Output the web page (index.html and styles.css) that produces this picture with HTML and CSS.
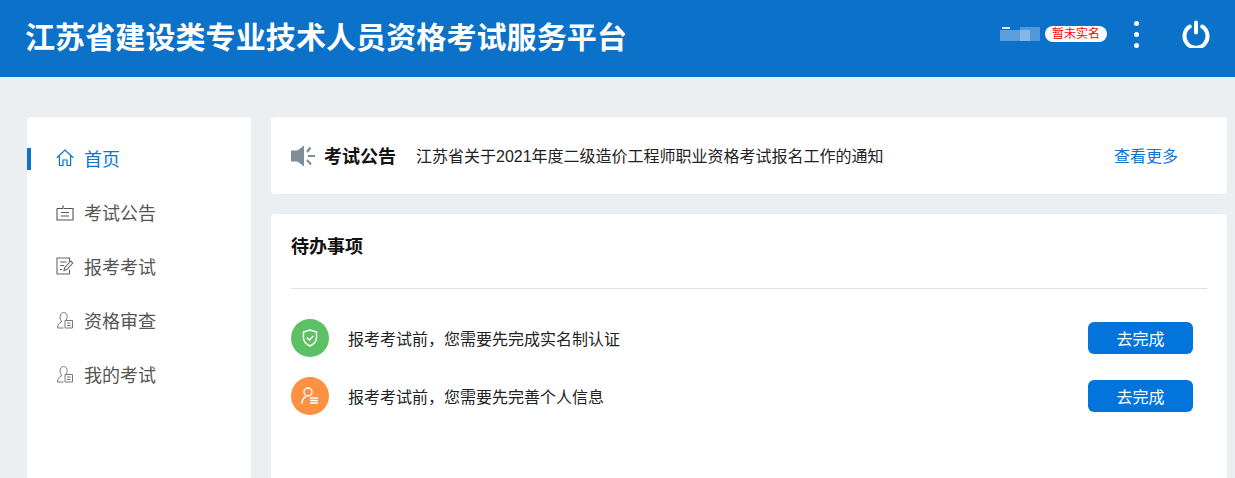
FILE: index.html
```html
<!DOCTYPE html>
<html lang="zh-CN">
<head>
  <meta charset="UTF-8" />
  <title>江苏省建设类专业技术人员资格考试服务平台</title>
  <link rel="stylesheet" href="styles.css">
</head>
<body>
  <header class="topbar">
    <h1>江苏省建设类专业技术人员资格考试服务平台</h1>
    <div class="topbar-right">
      <div class="user-blur"><i class="b1"></i><i class="b2"></i><i class="b3"></i><i class="b4"></i></div>
      <span class="realname">暂未实名</span>
      <div class="dots"><i></i><i></i><i></i></div>
      <svg class="power" width="28" height="28" viewBox="0 0 28 28" fill="none" stroke="#fff" stroke-width="4" stroke-linecap="round">
        <path d="M7.800 6.500a11.500 11.500 0 1 0 12.400 0"/>
        <path d="M14 2.500v10"/>
      </svg>
    </div>
  </header>

  <div class="page">
    <nav class="sidebar">
      <a class="nav-item active">
        <svg width="18" height="18" viewBox="0 0 18 18" fill="none" stroke="#0c71c9" stroke-width="1.200">
          <path d="M.8 8.800 9 1l8.200 7.800M3.400 7v9.500h3.600v-5.500h4v5.500h3.600V7"/>
        </svg>
        <span>首页</span>
      </a>
      <a class="nav-item">
        <svg width="18" height="18" viewBox="0 0 18 18" fill="none" stroke="#555" stroke-width="1.100">
          <path d="M1 5.500h5.500l1-3M1 5.500V17h16V5.500h-9.500M5 9.500h8M5 13h8"/>
        </svg>
        <span>考试公告</span>
      </a>
      <a class="nav-item">
        <svg width="18" height="18" viewBox="0 0 18 18" fill="none" stroke="#666" stroke-width="1.100">
          <path d="M13.500 4.500V1H1v16h12.500v-4.500M4 5h6.500M4 8.500h4M4 12.500h2M8 13.500l.8-3 6-6.500 2 2-6 6.500z"/>
        </svg>
        <span>报考考试</span>
      </a>
      <a class="nav-item">
        <svg width="18" height="18" viewBox="0 0 18 18" fill="none" stroke="#777" stroke-width="1">
          <path d="M6 10.500C3 9 3.500 1.500 7.500 1.500s4.500 5 2.500 7.500M6 10.500c-3 1-4.500 3.500-4.500 6.500h6M9 9.500h7.500v7.500h-7.500zM11 12h3.500M11 14.500h3.500"/>
        </svg>
        <span>资格审查</span>
      </a>
      <a class="nav-item">
        <svg width="18" height="18" viewBox="0 0 18 18" fill="none" stroke="#777" stroke-width="1">
          <path d="M6 10.500C3 9 3.500 1.500 7.500 1.500s4.500 5 2.500 7.500M6 10.500c-3 1-4.500 3.500-4.500 6.500h6M9 9.500h7.500v7.500h-7.500zM11 12h3.500M11 14.500h3.500"/>
        </svg>
        <span>我的考试</span>
      </a>
    </nav>

    <main class="content">
      <section class="notice card">
        <svg class="horn" width="24" height="22" viewBox="0 0 24 22" fill="#7f8c99">
          <path d="M0 5.500h6.500L13 .5v21L6.500 16.500H0z"/>
          <path d="M19.500 2.500l-3.500 4.500M17 11h7M16 15l4 4.500" stroke="#7f8c99" stroke-width="2.200" fill="none"/>
        </svg>
        <strong>考试公告</strong>
        <span class="notice-text">江苏省关于2021年度二级造价工程师职业资格考试报名工作的通知</span>
        <a class="more">查看更多</a>
      </section>

      <section class="todo card">
        <h2>待办事项</h2>
        <div class="todo-list">
          <div class="todo-row">
            <span class="circle green">
              <svg width="16" height="18" viewBox="0 0 16 18" fill="none" stroke="#fff" stroke-width="1.400">
                <path d="M8 1 1.500 3v6c0 4 3.500 6.500 6.500 8 3-1.500 6.500-4 6.500-8V3z"/>
                <path d="M4.800 8.500 7.300 11l4-4"/>
              </svg>
            </span>
            <p>报考考试前，您需要先完成实名制认证</p>
            <button>去完成</button>
          </div>
          <div class="todo-row">
            <span class="circle orange">
              <svg width="18" height="18" viewBox="0 0 18 18" fill="none" stroke="#fff" stroke-width="1.400">
                <circle cx="7" cy="5" r="4"/>
                <path d="M1 17c0-4 1.500-6.500 4-7.500"/>
                <path d="M9 11h8M9 13.500h8M9 16h8" stroke-width="1.500"/>
              </svg>
            </span>
            <p>报考考试前，您需要先完善个人信息</p>
            <button>去完成</button>
          </div>
        </div>
      </section>
    </main>
  </div>
</body>
</html>
```

FILE: styles.css
```css
* { box-sizing: border-box; margin: 0; padding: 0; }
html, body { height: 100%; overflow: hidden; }
body {
  font-family: "Liberation Sans", "Noto Sans CJK SC", sans-serif;
  background: #ebeff2;
  color: #222;
}
.topbar {
  height: 77px;
  background: #0c71c9;
  color: white;
  display: flex;
  align-items: center;
  justify-content: space-between;
  padding: 0 25px 0 25px;
}
.topbar h1 {
  font-size: 30px;
  font-weight: 700;
  letter-spacing: 0.1px;
  margin-top: -8px;
}
.topbar-right {
  display: flex;
  align-items: center;
  margin-top: -9px;
}
.user-blur {
  width: 40px;
  height: 24px;
  position: relative;
  margin-right: 5px;
}
.user-blur i { position: absolute; display: block; }
.b1 { left: 0; top: 8px; width: 20px; height: 11px; background: #5a9fdc; }
.b2 { left: 20px; top: 5px; width: 20px; height: 14px; background: #4f98da; }
.b3 { left: 20px; top: 8px; width: 10px; height: 11px; background: #84b7e6; }
.b4 { left: 2px; top: 5px; width: 8px; height: 2px; background: #d9e9f7; }
.realname {
  width: 62px;
  height: 16px;
  line-height: 16px;
  border-radius: 8px;
  background: white;
  color: #f00;
  font-size: 12px;
  text-align: center;
  margin-right: 27px;
}
.dots { display: flex; flex-direction: column; gap: 6px; margin-right: 43px; }
.dots i {
  display: block;
  width: 5px;
  height: 5px;
  border-radius: 50%;
  background: white;
}
.power { display: block; }

.page {
  display: flex;
  gap: 20px;
  padding: 40px 8px 0 27px;
}
.sidebar {
  width: 224px;
  height: 361px;
  flex: none;
  background: white;
  border-radius: 4px 4px 0 0;
  padding-top: 14px;
}
.nav-item {
  height: 54px;
  display: flex;
  align-items: center;
  gap: 10px;
  padding-left: 29px;
  font-size: 18px;
  color: #555;
  position: relative;
}
.nav-item.active { color: #0c74d4; }
.nav-item.active::before {
  content: "";
  position: absolute;
  left: 0;
  top: 17px;
  width: 4px;
  height: 22px;
  background: #0c71c9;
}
.content { flex: 1; display: flex; flex-direction: column; gap: 20px; }
.card { background: white; border-radius: 4px; }
.notice {
  height: 77px;
  display: flex;
  align-items: center;
  padding: 0 48px 0 20px;
}
.horn { flex: none; margin-right: 9px; }
.notice strong { font-size: 18px; color: #111; margin-right: 20px; margin-top: -2px; }
.notice-text { font-size: 16px; color: #222; flex: 1; margin-top: -2px; }
.more { font-size: 16px; color: #0c74d4; margin-top: -2px; margin-right: 1px; }
.todo { height: 264px; padding: 0 20px; border-radius: 4px 4px 0 0; }
.todo h2 {
  font-size: 18px;
  font-weight: 700;
  color: #111;
  height: 75px;
  line-height: 66px;
  border-bottom: 1px solid #e2e2e2;
}
.todo-list { padding-top: 20px; }
.todo-row {
  height: 58px;
  display: flex;
  align-items: center;
  padding-right: 14px;
}
.circle {
  width: 38px;
  height: 38px;
  border-radius: 50%;
  display: flex;
  align-items: center;
  justify-content: center;
  flex: none;
  margin-right: 19px;
}
.green { background: #5cc164; }
.orange { background: #ff9142; }
.todo-row p { flex: 1; font-size: 16px; color: #222; }
.todo-row button {
  width: 105px;
  height: 32px;
  background: #0274dc;
  color: white;
  border: none;
  border-radius: 6px;
  font-family: inherit;
  font-size: 16px;
  cursor: pointer;
}
```
